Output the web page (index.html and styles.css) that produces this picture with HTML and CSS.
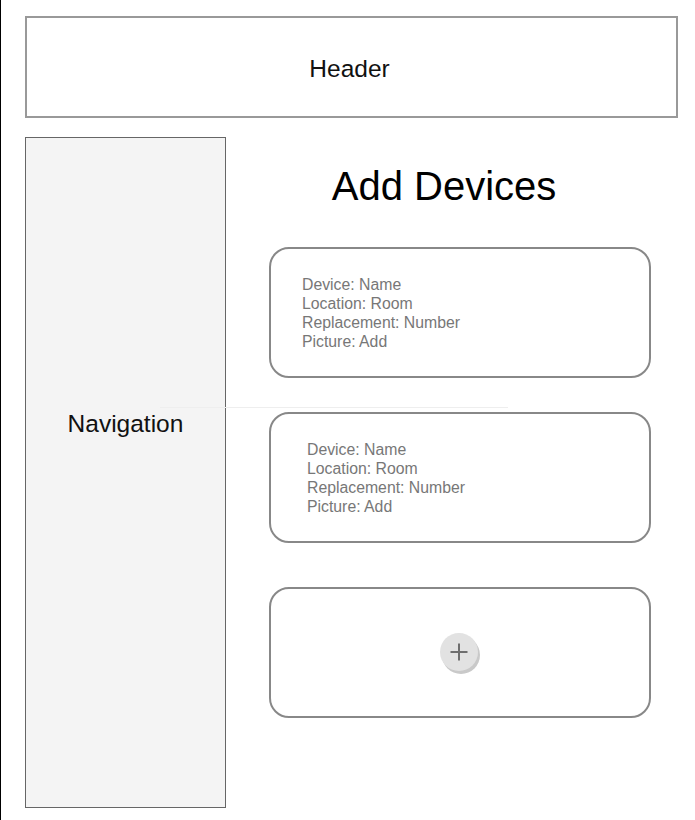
FILE: index.html
```html
<!DOCTYPE html>
<html lang="en">
<head>
<meta charset="utf-8">
<title>Add Devices</title>
<link rel="stylesheet" href="styles.css">
</head>
<body>
<div class="page">
  <header class="header">Header</header>
  <div class="layout">
    <nav class="nav">Navigation</nav>
    <main class="main">
      <h1 class="title">Add Devices</h1>
      <div class="card card-a">
        <div class="fields">
          <div>Device: Name</div>
          <div>Location: Room</div>
          <div>Replacement: Number</div>
          <div>Picture: Add</div>
        </div>
      </div>
      <div class="card card-b">
        <div class="fields">
          <div>Device: Name</div>
          <div>Location: Room</div>
          <div>Replacement: Number</div>
          <div>Picture: Add</div>
        </div>
      </div>
      <div class="card card-add">
        <button class="add-btn" aria-label="Add device">
          <svg width="18" height="18" viewBox="0 0 18 18"><path d="M9 0.5V17.5M0.5 9H17.5" stroke="#6e6e6e" stroke-width="2" fill="none"/></svg>
        </button>
      </div>
    </main>
  </div>
  <div class="guide"></div>
</div>
</body>
</html>
```
FILE: styles.css
```css
* { box-sizing: border-box; }
html, body { margin: 0; padding: 0; background: #fff; }
body {
  font-family: "Liberation Sans", Arial, sans-serif;
  border-left: 1px solid #000;
  min-height: 820px;
}
.page {
  position: relative;
  padding: 16px 0 0 24px;
}
.header {
  width: 653px;
  height: 102px;
  border: 2px solid #999;
  display: flex;
  align-items: center;
  justify-content: center;
  font-size: 24.5px;
  color: #111;
  padding-top: 3px;
  padding-right: 4px;
}
.layout {
  display: flex;
  margin-top: 19px;
}
.nav {
  width: 201px;
  height: 671px;
  border: 1px solid #666;
  background: #f4f4f4;
  text-align: center;
  font-size: 24.5px;
  color: #111;
  padding-top: 272px;
}
.main {
  margin-left: 43px;
  width: 382px;
  display: flex;
  flex-direction: column;
}
.title {
  margin: 29px 0 0 0;
  font-weight: normal;
  font-size: 40px;
  line-height: 40px;
  text-align: center;
  padding-right: 32px;
  color: #000;
}
.card {
  height: 131px;
  border: 2px solid #888;
  border-radius: 20px;
  display: flex;
  align-items: center;
}
.card-a { margin-top: 41px; padding-left: 31px; }
.card-b { margin-top: 34px; padding-left: 36px; }
.card-add { margin-top: 44px; justify-content: center; }
.fields {
  font-size: 15.8px;
  line-height: 19px;
  color: #777;
  padding-top: 1px;
}
.add-btn {
  width: 38px;
  height: 38px;
  border-radius: 50%;
  border: none;
  background: #e2e2e2;
  box-shadow: 2px 3px 0 #c9c9c9;
  display: flex;
  align-items: center;
  justify-content: center;
  padding: 0;
  margin: -2px 0 0 -2px;
}
.guide {
  position: absolute;
  left: 159px;
  top: 407px;
  width: 348px;
  height: 1px;
  background: #eeeeee;
}
```
